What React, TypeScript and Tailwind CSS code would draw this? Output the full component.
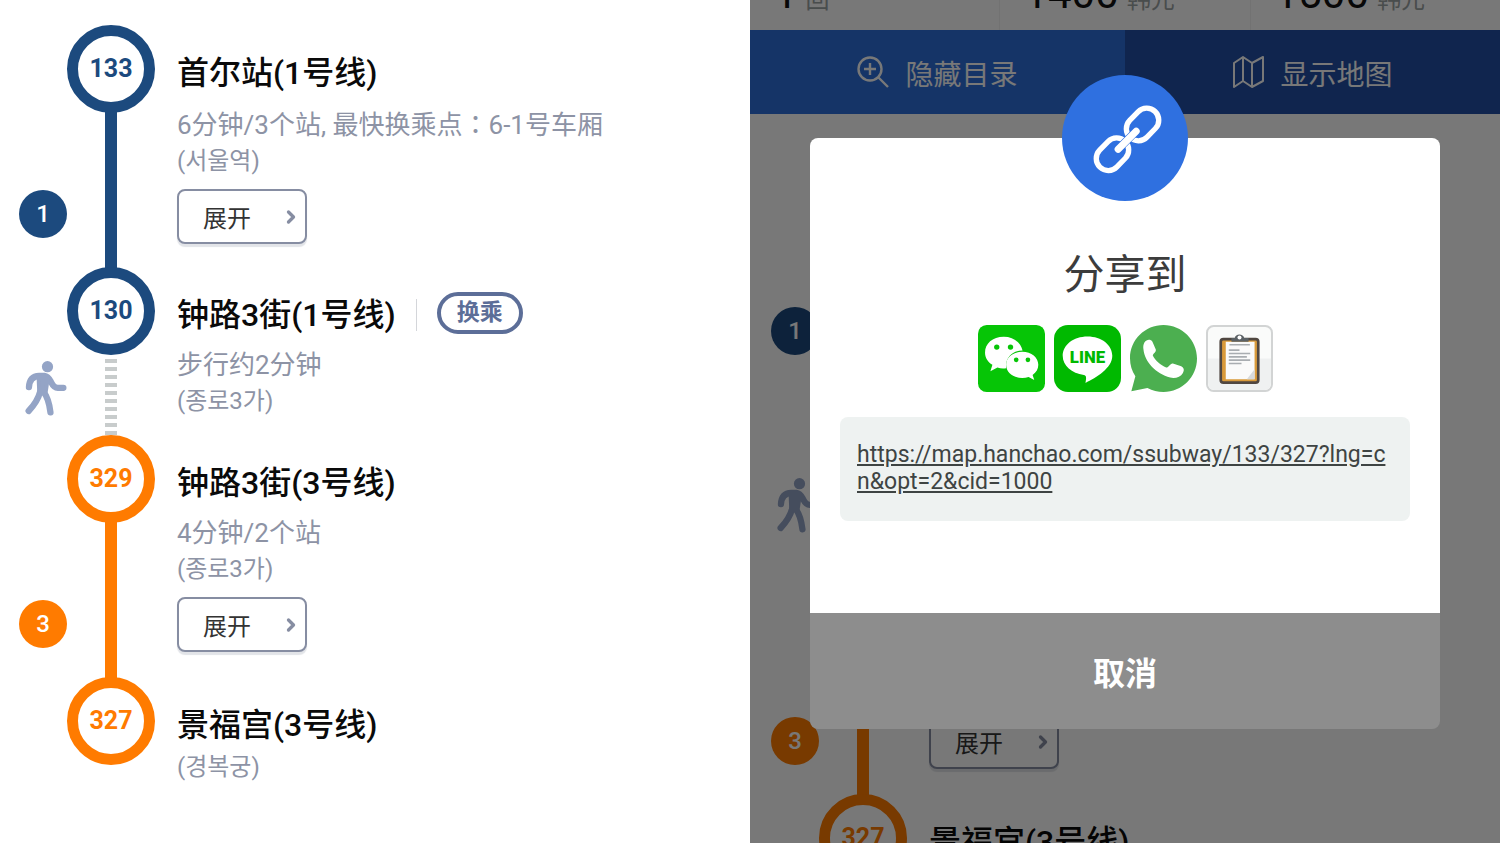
import { ChevronRightIcon } from "lucide-react";
import clsx from "clsx";

type Line = "blue" | "orange" | "walk";

interface Stop {
  code: string;
  color: "blue" | "orange";
  name: string;
  local: string;
  info?: React.ReactNode;
  next?: Line;
  lineNo?: string;
  transfer?: boolean;
}

const stops: Stop[] = [
  {
    code: "133",
    color: "blue",
    name: "首尔站(1号线)",
    local: "(서울역)",
    info: (
      <>
        6分钟/3个站, 最快换乘点<span className="font-['Noto_Sans_CJK_TC',sans-serif]">：</span>6-1号车厢
      </>
    ),
    next: "blue",
    lineNo: "1",
  },
  {
    code: "130",
    color: "blue",
    name: "钟路3街(1号线)",
    local: "(종로3가)",
    info: "步行约2分钟",
    next: "walk",
    transfer: true,
  },
  {
    code: "329",
    color: "orange",
    name: "钟路3街(3号线)",
    local: "(종로3가)",
    info: "4分钟/2个站",
    next: "orange",
    lineNo: "3",
  },
  { code: "327", color: "orange", name: "景福宫(3号线)", local: "(경복궁)" },
];

const fares = [
  { value: "1", unit: "回" },
  { value: "1400", unit: "韩元" },
  { value: "1500", unit: "韩元" },
];

function WalkIcon() {
  return (
    <svg viewBox="0 0 130 166" className="h-[55px] w-[43px]" fill="none" stroke="#94a4c6" strokeWidth="19" strokeLinecap="round" strokeLinejoin="round">
      <circle cx="71" cy="17" r="17" fill="#94a4c6" stroke="none" />
      <path d="M15 79C16 60 24 46 46 45H62C72 46 76 53 81 62C87 74 93 81 102 81H119" />
      <path d="M44 48L72 52L65 98L46 94Z" fill="#94a4c6" strokeWidth="12" />
      <path d="M49 92C44 112 30 134 14 151" />
      <path d="M58 92C70 106 76 122 80 155" />
    </svg>
  );
}

function RouteStop({ stop }: { stop: Stop }) {
  return (
    <li className={clsx("flex", stop.next === "walk" ? "h-[168px]" : "h-[242px]")}>
      <div className="w-[67px] shrink-0">
        {stop.lineNo && (
          <div
            className={clsx(
              "mt-[165px] ml-[19px] flex size-12 items-center justify-center rounded-full text-2xl font-medium text-white",
              stop.color === "blue" ? "bg-[#1c4a7e]" : "bg-[#ff7b00]"
            )}
          >
            {stop.lineNo}
          </div>
        )}
        {stop.next === "walk" && (
          <div className="mt-[94px] ml-6">
            <WalkIcon />
          </div>
        )}
      </div>

      <div className="flex w-[88px] shrink-0 flex-col items-center">
        <div
          className={clsx(
            "flex size-[88px] shrink-0 items-center justify-center rounded-full border-[11px] bg-white text-[25px] leading-10 font-bold",
            stop.color === "blue" ? "border-[#1c4a7e] text-[#1c4a7e]" : "border-[#ff7b00] text-[#ff7b00]"
          )}
        >
          {stop.code}
        </div>
        {stop.next === "blue" && <div className="-my-px w-3 flex-1 bg-[#1c4a7e]" />}
        {stop.next === "orange" && <div className="-my-px w-3 flex-1 bg-[#ff7b00]" />}
        {stop.next === "walk" && (
          <div className="mt-1 w-3 flex-1 bg-[repeating-linear-gradient(to_bottom,#c8cccc_0px,#c8cccc_4px,transparent_4px,transparent_8px)]" />
        )}
      </div>

      <div className="ml-[22px] min-w-0 pt-6">
        <div className="flex h-12 items-center">
          <h2 className="text-[32px] leading-12 font-medium whitespace-nowrap text-[#0a0a0a]">{stop.name}</h2>
          {stop.transfer && (
            <>
              <span className="mx-5 h-8 w-px bg-[#d4d6da]" />
              <span className="mb-1 flex h-[42px] w-[86px] items-center justify-center rounded-full border-4 border-[#5c6e98] text-[23px] font-bold text-[#5c6e98]">
                换乘
              </span>
            </>
          )}
        </div>
        <div className={clsx("text-[#8d93a5]", stop.info && "pt-2")}>
          {stop.info && <p className="text-[26px] leading-9 whitespace-nowrap">{stop.info}</p>}
          <p className="font-[Roboto,'Noto_Sans_CJK_KR',sans-serif] text-2xl leading-9 whitespace-nowrap">{stop.local}</p>
        </div>
        {stop.lineNo && (
          <button className="mt-2.5 flex h-[55px] w-[130px] items-center justify-between rounded-lg border-2 border-[#868da2] bg-white pr-1 pl-6 text-2xl text-[#333] shadow-[0_3px_1px_#e2e4e8]">
            <span className="pt-1">展开</span>
            <ChevronRightIcon className="size-5 text-[#868da2]" strokeWidth={4} />
          </button>
        )}
      </div>
    </li>
  );
}

function RouteList() {
  return (
    <ol>
      {stops.map((stop) => (
        <RouteStop key={stop.code} stop={stop} />
      ))}
    </ol>
  );
}

function SearchPlusIcon() {
  return (
    <svg viewBox="0 0 32 32" className="size-8" fill="none" stroke="currentColor" strokeWidth="2.400">
      <circle cx="13" cy="13" r="11.500" />
      <path d="M21 21L31 31M13 7V19M7 13H19" />
    </svg>
  );
}

function MapIcon() {
  return (
    <svg viewBox="0 0 32 32" className="size-8" fill="none" stroke="currentColor" strokeWidth="2" strokeLinejoin="round">
      <path d="M2 7L11 1L20 7L31 1V25L20 31L11 25L2 31ZM11 1V25M20 7V31" />
    </svg>
  );
}

function LinkBadge() {
  return (
    <svg viewBox="67 45 377 377" className="size-[126px]" fill="none" stroke="#fff" strokeWidth="16" strokeLinecap="round">
      <circle cx="255.500" cy="233.500" r="188.500" fill="#2f70e0" stroke="none" />
      <rect x="-54" y="-36" width="108" height="72" rx="36" transform="translate(308 193) rotate(-46)" />
      <rect x="-54" y="-36" width="108" height="72" rx="36" transform="translate(218 282) rotate(-46)" />
      <path d="M235 267L289 213" stroke="#2f70e0" strokeWidth="24" />
      <path d="M235 267L289 213" strokeWidth="21" />
    </svg>
  );
}

function WeChatLogo() {
  return (
    <svg viewBox="0 0 200 200" className="size-[67px]">
      <rect width="200" height="200" rx="26" fill="#06c506" />
      <path d="M77 35C43 35 21 56 21 82C21 98 29 110 43 119L37 138L58 127C66 130 76 130 84 129C80 99 102 76 133 76C127 51 105 35 77 35Z" fill="#fff" />
      <circle cx="56" cy="66" r="8" fill="#06c506" />
      <circle cx="97" cy="66" r="8" fill="#06c506" />
      <path d="M132 80C104 80 84 97 84 119C84 142 104 158 132 158C139 158 145 157 151 155L168 164L163 149C174 142 180 131 180 119C180 97 160 80 132 80Z" fill="#fff" />
      <circle cx="114" cy="104" r="7" fill="#06c506" />
      <circle cx="149" cy="104" r="7" fill="#06c506" />
    </svg>
  );
}

function LineLogo() {
  return (
    <svg viewBox="0 0 200 200" className="size-[67px]">
      <rect width="200" height="200" rx="42" fill="#00b900" />
      <path d="M100 34C58 34 26 59 26 92C26 122 53 145 89 149C97 151 97 156 94 173C126 157 174 129 174 92C174 59 142 34 100 34Z" fill="#fff" />
      <text x="100" y="112" textAnchor="middle" fontFamily="Roboto, sans-serif" fontSize="50" fontWeight="900" fill="#00b900">
        LINE
      </text>
    </svg>
  );
}

function WhatsAppLogo() {
  return (
    <svg viewBox="0 0 200 200" className="size-[67px]">
      <path d="M100 0C45 0 0 44 0 99C0 119 6 138 16 153L4 198L52 188C67 196 83 200 100 200C155 200 200 155 200 100C200 45 155 0 100 0Z" fill="#4caf50" />
      <path d="M43 52C50 42 62 42 67 50L77 73C79 80 69 85 68 91C76 107 91 119 108 127C116 127 121 113 128 115L153 123C161 127 163 134 158 143C151 155 135 161 120 157C77 145 44 112 40 72C39 64 40 57 43 52Z" fill="#fff" />
    </svg>
  );
}

function ClipboardLogo() {
  return (
    <svg viewBox="0 0 200 200" className="size-[67px]">
      <rect x="3" y="3" width="194" height="194" rx="20" fill="#fafbfa" stroke="#d2d4d4" strokeWidth="6" />
      <path d="M6 100H194V170Q194 194 174 194H26Q6 194 6 170Z" fill="#eff1f1" />
      <rect x="44" y="42" width="112" height="130" rx="8" fill="#d99a3a" stroke="#504741" strokeWidth="8" />
      <path d="M59 50H145V162H59Z" fill="#fafafa" />
      <path d="M145 132L122 162H145Z" fill="#d8dadc" />
      <path d="M76 50V39H86C87 25 112 25 114 39H127V50Z" fill="#5b6165" />
      <circle cx="100" cy="37" r="6" fill="#fff" />
      <path d="M70 59H131M68 75H100M68 85H132M68 95H122M68 105H132M68 115H106" stroke="#a9adb1" strokeWidth="5" />
    </svg>
  );
}

const shareTargets = [
  { label: "WeChat", Logo: WeChatLogo },
  { label: "LINE", Logo: LineLogo },
  { label: "WhatsApp", Logo: WhatsAppLogo },
  { label: "复制", Logo: ClipboardLogo },
];

function ShareDialog() {
  return (
    <div role="dialog" aria-labelledby="share-title" className="w-full">
      <div className="flex flex-col items-center rounded-t-lg bg-white px-[30px] pb-[92px]">
        <div className="-mt-[63px]">
          <LinkBadge />
        </div>
        <h1 id="share-title" className="mt-11 text-[41px] leading-[60px] text-[#3c3c3c]">
          分享到
        </h1>
        <div className="mt-5 flex gap-[9px]">
          {shareTargets.map(({ label, Logo }) => (
            <button key={label} aria-label={label}>
              <Logo />
            </button>
          ))}
        </div>
        <div className="mt-[25px] h-[104px] w-full rounded-lg bg-[#eef2f1] px-[17px] py-6">
          <a href="https://map.hanchao.com/ssubway/133/327?lng=cn&opt=2&cid=1000" className="block text-[23px] leading-[27px] break-all text-[#3e4443] underline">
            https://map.hanchao.com/ssubway/133/327?lng=cn&opt=2&cid=1000
          </a>
        </div>
      </div>
      <button className="h-[116px] w-full rounded-b-lg bg-[#8d8d8d] pt-1.5 text-[32px] font-bold text-white">取消</button>
    </div>
  );
}

export default function App() {
  return (
    <div className="grid h-screen grid-cols-2 overflow-hidden bg-white font-[Roboto,'Noto_Sans_CJK_SC','Noto_Sans_CJK_KR',sans-serif]">
      <main className="overflow-hidden pt-[25px]">
        <RouteList />
      </main>

      <section className="relative overflow-hidden bg-white">
        {/* Fare summary, scrolled mostly out of view */}
        <div className="flex h-[30px] items-end overflow-hidden">
          {fares.map((fare) => (
            <div key={fare.value} className="flex flex-1 items-baseline gap-2 border-r border-[#f2f2f2] pb-2.5 pl-6 last:border-r-0">
              <span className="text-[42px] leading-10 text-[#111]">{fare.value}</span>
              <span className="text-2xl leading-10 text-[#9ba3a3]">{fare.unit}</span>
            </div>
          ))}
        </div>

        <div className="grid h-[84px] grid-cols-2 text-[28px] text-white">
          <button className="flex items-center justify-center gap-4 bg-[#2d70dc]">
            <SearchPlusIcon />
            <span className="pt-2">隐藏目录</span>
          </button>
          <button className="flex items-center justify-center gap-4 bg-[#2250a6]">
            <MapIcon />
            <span className="pt-2">显示地图</span>
          </button>
        </div>

        <div className="pt-7 pl-0.5">
          <RouteList />
        </div>

        <div className="absolute inset-0 flex items-start bg-black/53 px-[60px] pt-[138px]">
          <ShareDialog />
        </div>
      </section>
    </div>
  );
}
